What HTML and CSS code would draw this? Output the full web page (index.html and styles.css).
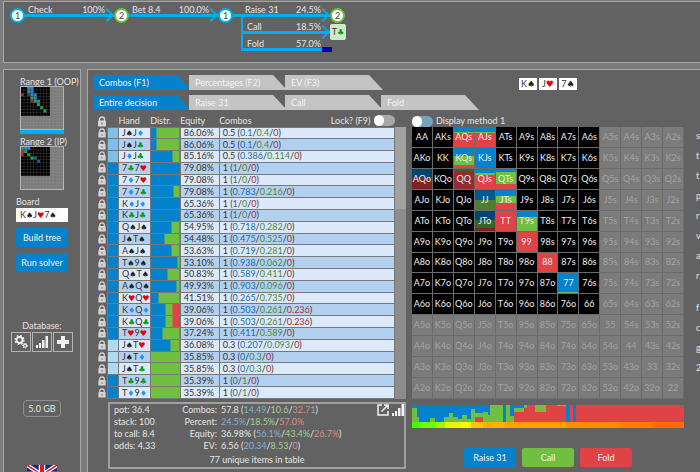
FILE: index.html
```html
<!DOCTYPE html>
<html lang="en">
<head>
    <meta charset="UTF-8">
    <meta name="viewport" content="width=device-width, initial-scale=1.0">
    <title>Range Solver</title>
    <link rel="stylesheet" href="styles.css">
</head>
<body>
    <svg class="sprite" aria-hidden="true">
        <symbol id="lock" viewBox="0 0 10 11">
            <path d="M2.5 5V3.5a2.5 2.5 0 0 1 5 0V5" fill="none" stroke="currentColor" stroke-width="1.4"/>
            <rect x="1" y="4.5" width="8" height="6" rx="1" fill="currentColor"/>
            <path d="M5 6.5v2" stroke="#777" stroke-width="1.2"/>
        </symbol>
        <symbol id="bars" viewBox="0 0 12 12">
            <path d="M0 9h2v3H0zM3 7h2v5H3zM6 4h2.500v8H6zM9.500 0H12v12H9.500z" fill="currentColor"/>
        </symbol>
    </svg>

    <header class="tree panel">
        <span class="node oop">1</span>
        <div class="edge arrow"><span>Check</span><span>100%</span></div>
        <span class="node ip">2</span>
        <div class="edge arrow"><span>Bet 8.4</span><span>100.0%</span></div>
        <span class="node oop">1</span>
        <div class="branches">
            <div class="branch">
                <div class="edge arrow first"><span>Raise 31</span><span>24.5%</span></div>
                <span class="node ip">2</span>
            </div>
            <div class="branch">
                <div class="edge arrow split"><span>Call</span><span>18.5%</span></div>
                <span class="next-card">T<i class="c">♣</i></span>
            </div>
            <div class="branch">
                <div class="edge split"><span>Fold</span><span>57.0%</span></div>
                <span class="leaf"></span>
            </div>
        </div>
    </header>

    <div class="columns">
        <aside class="sidebar panel">
            <div class="range">
                <span>Range 1 (OOP)</span>
                <svg class="thumb" id="range1" viewBox="0 0 130 130"></svg>
                <div class="active-bar"></div>
            </div>
            <div class="range">
                <span>Range 2 (IP)</span>
                <svg class="thumb" id="range2" viewBox="0 0 130 130"></svg>
            </div>
            <div class="board">
                <span>Board</span>
                <div class="board-box">K<i class="s">♠</i>J<i class="h">♥</i>7<i class="s">♠</i></div>
                <button type="button" class="btn blue">Build tree</button>
                <button type="button" class="btn blue">Run solver</button>
            </div>
            <div class="database">
                <span>Database:</span>
                <div class="icon-row">
                    <button type="button" aria-label="Settings">
                        <svg width="14" height="14" viewBox="0 0 14 14" fill="none" stroke="currentColor">
                            <circle cx="5.500" cy="5" r="3" stroke-width="1.800"/>
                            <circle cx="5.500" cy="5" r="4.400" stroke-width="1.400" stroke-dasharray="1.730 1.730"/>
                            <circle cx="11" cy="10.700" r="1.500" stroke-width="1.200"/>
                            <circle cx="11" cy="10.700" r="2.400" stroke-width="1" stroke-dasharray="1.080 1.080"/>
                        </svg>
                    </button>
                    <button type="button" aria-label="Statistics"><svg width="12" height="12"><use href="#bars"/></svg></button>
                    <button type="button" aria-label="Add">
                        <svg width="12" height="12" viewBox="0 0 12 12"><path d="M4 0h4v4h4v4H8v4H4V8H0V4h4z" fill="currentColor"/></svg>
                    </button>
                </div>
            </div>
            <div class="memory">5.0 GB</div>
            <svg class="flag" width="30" height="20" viewBox="0 0 60 40">
                <path d="M0 0h60v40H0z" fill="#1b2a78"/>
                <path d="M0 0l60 40M60 0L0 40" stroke="#fff" stroke-width="8"/>
                <path d="M0 0l60 40M60 0L0 40" stroke="#d8172c" stroke-width="3"/>
                <path d="M30 0v40M0 20h60" stroke="#fff" stroke-width="13"/>
                <path d="M30 0v40M0 20h60" stroke="#d8172c" stroke-width="8"/>
            </svg>
        </aside>

        <main class="main panel">
            <div class="work">
                <nav class="tabs">
                    <button type="button" class="tab active">Combos (F1)</button>
                    <button type="button" class="tab">Percentages (F2)</button>
                    <button type="button" class="tab">EV (F3)</button>
                </nav>
                <div class="cards">
                    <span>K<i class="s">♠</i></span>
                    <span>J<i class="h">♥</i></span>
                    <span>7<i class="s">♠</i></span>
                </div>
                <nav class="tabs second">
                    <button type="button" class="tab active">Entire decision</button>
                    <button type="button" class="tab">Raise 31</button>
                    <button type="button" class="tab">Call</button>
                    <button type="button" class="tab">Fold</button>
                </nav>

                <section class="combos">
                    <div class="table-wrap">
                        <table>
                            <thead>
                                <tr>
                                    <th class="lock"><svg width="10" height="11"><use href="#lock"/></svg></th>
                                    <th class="weight"></th>
                                    <th class="hand">Hand</th>
                                    <th class="distr">Distr.</th>
                                    <th class="equity">Equity</th>
                                    <th>
                                        <div class="combos-head">
                                            <span>Combos</span>
                                            <label>Lock? (F9) <input type="checkbox" class="toggle"></label>
                                        </div>
                                    </th>
                                </tr>
                            </thead>
                            <tbody id="rows"></tbody>
                        </table>
                        <div class="scrollbar"><div class="thumb-bar"></div></div>
                    </div>
                    <div class="summary">
                        <div class="spot">
                            <div>pot: 36.4</div>
                            <div>stack: 100</div>
                            <div>to call: 8.4</div>
                            <div>odds: 4.33</div>
                        </div>
                        <dl>
                            <dt>Combos:</dt><dd>57.8 (<b class="r">14.49</b>/<b class="k">10.6</b>/<b class="f">32.71</b>)</dd>
                            <dt>Percent:</dt><dd><b class="r">24.5%</b>/<b class="k">18.5%</b>/<b class="f">57.0%</b></dd>
                            <dt>Equity:</dt><dd>36.98% (<b class="r">56.1%</b>/<b class="k">43.4%</b>/<b class="f">26.7%</b>)</dd>
                            <dt>EV:</dt><dd>6.56 (<b class="r">20.34</b>/<b class="k">8.53</b>/<b class="f">0</b>)</dd>
                        </dl>
                        <div class="summary-icons">
                            <svg width="12" height="12" viewBox="0 0 12 12" fill="none" stroke="currentColor" stroke-width="1.500">
                                <path d="M5 1H1v10h10V7M7 1h4v4M11 1L4.500 7.500"/>
                            </svg>
                            <svg width="12" height="12"><use href="#bars"/></svg>
                        </div>
                        <p>77 unique items in table</p>
                    </div>
                </section>

                <section class="matrix-col">
                    <label class="method"><input type="checkbox" class="toggle on"> Display method 1</label>
                    <div class="matrix" id="matrix"></div>
                    <svg class="chart" viewBox="0 0 814 70" preserveAspectRatio="none" shape-rendering="crispEdges">
                        <rect width="814" height="52" fill="#0482cc"/>
                        <path fill="#70bf41" d="M0 52V10h14v28h8v14zM54 52V41h16v11zM96 52V38h14V24h14v14h14v6h12V30h14v14h12V13h12v11h24v-4h14v10h8V0h38v52zM280 52V0h14v34h10V8h30V0h128v52z"/>
                        <path fill="#e04345" d="M188 52V38h24v14zM304 52V22h30V10h10V0h24v20h34V0h32v4h28v48zM472 52V0h10v52zM492 0h322v52H492z"/>
                        <path fill="#0482cc" d="M462 0h10v22h-5v30h-5z"/>
                        <g id="strength"></g>
                    </svg>
                    <div class="actions">
                        <button type="button" class="btn blue">Raise 31</button>
                        <button type="button" class="btn green">Call</button>
                        <button type="button" class="btn red">Fold</button>
                    </div>
                </section>
            </div>

            <div class="notes">
                <p>s<br>t<br>t<br>p<br>r<br>v<br>a<br>r</p>
                <p>f<br>c<br>g<br>2</p>
            </div>
        </main>
    </div>

    <script src="script.js"></script>
</body>
</html>
```
FILE: styles.css
```css
* {
    box-sizing: border-box;
}
body {
    margin: 0;
    padding: 1px 0 0 3px;
    height: 100vh;
    overflow: hidden;
    display: flex;
    flex-direction: column;
    gap: 6px;
    background: #7b7b7b;
    color: #e4e4e4;
    font-family: Lato, "DejaVu Sans", sans-serif;
    font-size: 9px;
    line-height: 12px;
}
button {
    font: inherit;
    color: #f2f2f2;
    border: none;
    padding: 0;
    cursor: pointer;
}
i {
    font-style: normal;
    font-family: "DejaVu Sans", sans-serif;
    font-size: 8px;
    line-height: 1;
}
.s { color: #222; }
.h { color: #e60000; }
.d { color: #1e90ff; }
.c { color: #0a9a0a; }
.sprite {
    position: absolute;
    width: 0;
    height: 0;
}
.panel {
    background: #626262;
    border: 1px solid #a6a6a6;
}

/* game tree */
.tree {
    flex: none;
    height: 62px;
    border-right: none;
    display: flex;
    align-items: flex-start;
    padding: 6px 0 0 6px;
}
.node {
    flex: none;
    width: 15px;
    height: 15px;
    border-radius: 50%;
    border: 2px solid #00adf0;
    background: #fff;
    color: #444;
    line-height: 11px;
    text-align: center;
}
.node.ip {
    border-color: #70bf41;
}
.edge {
    position: relative;
    width: 89px;
    height: 9px;
    padding: 0 9px 0 3px;
    display: flex;
    justify-content: space-between;
    align-items: flex-end;
    border-bottom: 3px solid #00adf0;
    line-height: 8px;
}
.edge.arrow::after {
    content: "";
    position: absolute;
    right: 2px;
    bottom: -6px;
    width: 8px;
    height: 8px;
    border: solid #00adf0;
    border-width: 2px 2px 0 0;
    transform: rotate(45deg);
}
.edge.first {
    width: 97px;
    padding-left: 12px;
}
.edge.split {
    margin-left: 8px;
    padding-left: 4px;
    height: 17px;
    border-left: 2px solid #00adf0;
}
.branch {
    display: flex;
}
.branch:first-child {
    height: 9px;
}
.next-card {
    width: 16px;
    height: 16px;
    margin-top: 7px;
    border-radius: 2px;
    background: #cdebc8;
    color: #333;
    line-height: 16px;
    text-align: center;
    white-space: nowrap;
}
.branch:nth-child(2) {
    height: 17px;
}
.leaf {
    width: 10px;
    height: 5px;
    margin: 13px 0 0 -8px;
    background: #0000b0;
    z-index: 1;
}

.columns {
    flex: 1;
    min-height: 0;
    display: flex;
    gap: 6px;
}

/* sidebar */
.sidebar {
    flex: none;
    width: 78px;
    border-bottom: none;
    display: flex;
    flex-direction: column;
    padding-top: 6px;
}
.range {
    padding-left: 16px;
    height: 60px;
    display: flex;
    flex-direction: column;
    flex: none;
    white-space: nowrap;
}
.range > span {
    height: 10px;
    line-height: 11px;
}
.thumb {
    width: 44px;
    height: 44px;
    border: 1px solid #b4b4b4;
    background: #8a8a8a;
}
.active-bar {
    width: 44px;
    height: 4px;
    background: #00adf0;
}
.board {
    padding: 0 12px;
    display: flex;
    flex-direction: column;
}
.board-box {
    height: 14px;
    margin-bottom: 6px;
    padding-left: 4px;
    background: #fff;
    color: #333;
    line-height: 13px;
}
.btn {
    height: 19px;
    border-radius: 2px;
}
.board .btn {
    margin-bottom: 6px;
}
.blue { background: #0482cc; }
.green { background: #70bf41; }
.red { background: #e04345; }
.database {
    margin-top: 42px;
    text-align: center;
}
.icon-row {
    display: flex;
    justify-content: center;
    gap: 1px;
}
.icon-row button {
    width: 20px;
    height: 20px;
    display: flex;
    align-items: center;
    justify-content: center;
    background: none;
    border: 1px solid #b4b4b4;
}
.memory {
    width: 38px;
    height: 17px;
    margin: 48px auto;
    border: 1px solid #8e8e8e;
    border-radius: 4px;
    line-height: 15px;
    text-align: center;
}
.flag {
    flex: none;
    align-self: center;
}

/* main panel */
.main {
    flex: 1;
    min-width: 0;
    border-right: none;
    border-bottom: none;
    padding: 5px 0 0 5px;
    display: flex;
    gap: 12px;
}
.work {
    flex: 1;
    min-width: 0;
    display: grid;
    grid-template-columns: 313fr 272fr;
    grid-template-rows: 15px 15px 1fr;
    column-gap: 6px;
    row-gap: 5px;
}
.tabs {
    display: flex;
}
.tabs.second {
    grid-column: 1 / -1;
}
.tab {
    flex: none;
    width: 98px;
    margin-right: -2px;
    padding-left: 6px;
    text-align: left;
    background: #c4c4c4;
    clip-path: polygon(0 0, calc(100% - 14px) 0, 100% 100%, 0 100%);
}
.tab.active {
    position: relative;
    background: #0482cc;
}
.cards {
    display: flex;
    justify-content: center;
    gap: 2px;
    padding-top: 3px;
}
.cards span {
    width: 18px;
    height: 12px;
    background: #fff;
    color: #333;
    text-align: center;
    line-height: 12px;
    white-space: nowrap;
}
.cards i {
    font-size: 9px;
}

.combos {
    min-width: 0;
}
.table-wrap {
    display: flex;
}
table {
    flex: 1;
    height: 284px;
    border-collapse: collapse;
    table-layout: fixed;
}
th {
    height: 12px;
    padding: 0;
    text-align: left;
    font-weight: normal;
    line-height: 11px;
}
.lock {
    width: 14px;
    padding-left: 4px;
    color: #d6d6d6;
}
.lock svg {
    display: block;
}
.weight { width: 11px; }
.hand { width: 30px; }
.distr { width: 30px; }
.equity { width: 39px; }
.combos-head {
    display: flex;
    justify-content: space-between;
}
.combos-head label,
.method {
    display: flex;
    align-items: center;
    gap: 3px;
}
.toggle {
    appearance: none;
    position: relative;
    width: 21px;
    height: 11px;
    margin: 0;
    border-radius: 6px;
    background: #a8a8a8;
}
.toggle::before {
    content: "";
    position: absolute;
    width: 10px;
    height: 11px;
    border-radius: 50%;
    background: #fff;
}
.toggle.on {
    background: #74a3c0;
}
td {
    height: 11px;
    padding: 0 0 0 3px;
    border: 1px solid #777;
    line-height: 10px;
    color: #333;
    white-space: nowrap;
    background: #dce9fa;
}
tr:nth-child(even) td {
    background: #b3d0f1;
}
tbody .lock,
tbody tr:nth-child(even) .lock {
    background: none;
    border: none;
    padding: 0 0 0 4px;
    color: #d6d6d6;
}
tbody tr .weight,
tbody tr:nth-child(even) .weight { background: #0482cc; }
tbody tr.half .weight,
tbody tr.half:nth-child(even) .weight { background: #7fbfe5; }
tbody tr.third .weight,
tbody tr.third:nth-child(even) .weight { background: #b2d9ef; }
td .r { color: #1c6ba3; }
td .k { color: #4a8a34; }
td .f { color: #a83232; }
b {
    font-weight: normal;
}
.scrollbar {
    flex: none;
    width: 11px;
    margin-top: 12px;
    background: #8c8c8c;
}
.thumb-bar {
    height: 30%;
    background: #a2a2a2;
}

.summary {
    position: relative;
    margin: 3px 0 0 15px;
    border: 2px solid #a0a0a0;
    height: 67px;
    padding: 0 4px;
    display: grid;
    grid-template-columns: 66px 1fr;
    align-content: start;
}
.summary dl {
    margin: 0;
    display: grid;
    grid-template-columns: 37px 1fr;
    column-gap: 4px;
}
.summary dt {
    text-align: right;
}
.summary dd {
    margin: 0;
}
.summary p {
    grid-column: 1 / -1;
    margin: 2px 0 0;
    text-align: center;
}
.summary .r { color: #7eb3d6; }
.summary .k { color: #a2cf8d; }
.summary .f { color: #dd8a8a; }
.summary-icons {
    position: absolute;
    top: 0;
    right: 0;
    display: flex;
    gap: 3px;
    color: #f4f4f4;
}

.matrix-col {
    min-width: 0;
}
.method {
    height: 12px;
    line-height: 12px;
}
.matrix {
    display: grid;
    grid-template-columns: repeat(13, 1fr);
    grid-auto-rows: 1fr;
    aspect-ratio: 1;
}
.cell {
    display: flex;
    align-items: center;
    justify-content: center;
    border: solid #6b6b6b;
    border-width: 0 1px 1px 0;
    background: #000;
    color: #eee;
}
.cell.off {
    background: #7b7b7b;
    color: #a2a2a2;
}
.chart {
    display: block;
    width: 100%;
    height: 23px;
    margin-top: 6px;
}
.actions {
    margin-top: 20px;
    display: flex;
    justify-content: center;
    gap: 6px;
}
.actions .btn {
    width: 52px;
}

.notes {
    flex: none;
    width: 4px;
    padding-top: 51px;
    font-size: 9px;
    line-height: 20px;
}
.notes p {
    margin: 0 0 12px;
}
```
FILE: script.js
```js
const BLUE = '#0482cc', GREEN = '#70bf41', RED = '#e04345';
const SUITS = { s: '♠', h: '♥', d: '♦', c: '♣' };

// hand, equity, combos, raise / call / fold
const rows = [
    ['JsJd', '86.06%', 0.5, 0.1, 0.4, 0],
    ['JsJc', '86.06%', 0.5, 0.1, 0.4, 0],
    ['JdJc', '85.16%', 0.5, 0.386, 0.114, 0],
    ['7c7h', '79.08%', 1, 1, 0, 0],
    ['7d7h', '79.08%', 1, 1, 0, 0],
    ['7d7c', '79.08%', 1, 0.783, 0.216, 0],
    ['KdJd', '65.36%', 1, 1, 0, 0],
    ['KcJc', '65.36%', 1, 1, 0, 0],
    ['QsJs', '54.95%', 1, 0.718, 0.282, 0],
    ['JsTs', '54.48%', 1, 0.475, 0.525, 0],
    ['AsJs', '53.63%', 1, 0.719, 0.281, 0],
    ['Ts9s', '53.10%', 1, 0.938, 0.062, 0],
    ['QsTs', '50.83%', 1, 0.589, 0.411, 0],
    ['AsQs', '49.93%', 1, 0.903, 0.096, 0],
    ['KhQh', '41.51%', 1, 0.265, 0.735, 0],
    ['KdQd', '39.06%', 1, 0.503, 0.261, 0.236],
    ['KcQc', '39.06%', 1, 0.503, 0.261, 0.236],
    ['Th9h', '37.24%', 1, 0.411, 0.589, 0],
    ['JsTh', '36.08%', 0.3, 0.207, 0.093, 0],
    ['JsTd', '35.85%', 0.3, 0, 0.3, 0],
    ['JsTc', '35.85%', 0.3, 0, 0.3, 0],
    ['Tc9c', '35.39%', 1, 0, 1, 0],
    ['Td9d', '35.39%', 1, 0, 1, 0]
];

// stacked colour bands: [[colour, end %], ...]
function bands(direction, parts) {
    let from = 0;
    const stops = parts.map(([color, to]) => {
        const stop = `${color} ${from}% ${to}%`;
        from = to;
        return stop;
    });
    return `linear-gradient(${direction}, ${stops.join(', ')})`;
}

document.getElementById('rows').innerHTML = rows.map(([hand, equity, total, r, k, f]) => {
    const cards = hand.replace(/(.)([shdc])/g, (m, rank, suit) => `${rank}<i class="${suit}">${SUITS[suit]}</i>`);
    const distr = bands('to right', [[BLUE, r / total * 100], [GREEN, (r + k) / total * 100 + (f ? 0 : 1)], [RED, 100]]);
    const weight = total === 0.5 ? 'half' : total === 0.3 ? 'third' : '';
    return `<tr class="${weight}">
        <td class="lock"><svg width="10" height="10"><use href="#lock"/></svg></td>
        <td class="weight"></td>
        <td>${cards}</td>
        <td style="background: ${distr}"></td>
        <td>${equity}</td>
        <td>${total} (<b class="r">${r}</b>/<b class="k">${k}</b>/<b class="f">${f}</b>)</td>
    </tr>`;
}).join('');

// range matrix
const RANKS = 'AKQJT98765432';
const mixed = {
    AQs: [[BLUE, 24], [GREEN, 28], [RED, 100]],
    AJs: [[BLUE, 24], [GREEN, 32], [RED, 100]],
    KQs: [[BLUE, 40], [GREEN, 84], [RED, 100]],
    KJs: [[BLUE, 100]],
    AQo: [['#00466e', 40], ['#7a2428', 100]],
    QQ: [['#3a6425', 8], ['#922c2e', 100]],
    QJs: [[BLUE, 22], [GREEN, 32], [RED, 100]],
    QTs: [[BLUE, 16], [GREEN, 74], [RED, 100]],
    JJ: [['#005a8e', 48], ['#4d7f2e', 100]],
    JTs: [[BLUE, 28], [GREEN, 66], [RED, 100]],
    JTo: [['#00466e', 45], ['#3a6425', 86], ['#7a2428', 100]],
    TT: [[RED, 100]],
    T9s: [[BLUE, 32], [GREEN, 100]],
    99: [[RED, 100]],
    88: [[RED, 100]],
    77: [[BLUE, 93], [GREEN, 100]]
};
let html = '';
for (let y = 0; y < 13; y++) {
    for (let x = 0; x < 13; x++) {
        const name = x === y ? RANKS[x] + RANKS[x] : x > y ? RANKS[y] + RANKS[x] + 's' : RANKS[x] + RANKS[y] + 'o';
        const off = x > 8 || y > 8 ? ' off' : '';
        const style = mixed[name] ? ` style="background: ${bands('to bottom', mixed[name])}"` : '';
        html += `<div class="cell${off}"${style}>${name}</div>`;
    }
}
document.getElementById('matrix').innerHTML = html;

// small range previews: [column, row, colour]
function drawThumb(id, cells) {
    let out = '';
    for (let y = 0; y < 13; y++) {
        for (let x = 0; x < 13; x++) {
            const hit = cells.find(c => c[0] === x && c[1] === y);
            const fill = hit ? hit[2] : x < 9 && y < 9 ? '#000' : '#7b7b7b';
            out += `<rect x="${x * 10}" y="${y * 10}" width="8.5" height="8.5" fill="${fill}"/>`;
        }
    }
    document.getElementById(id).innerHTML = '<path d="M0 0h90v90H0z" fill="#3c3c3c"/>' + out;
}
const B = '#2a86dc', G = '#1ea83c', R = '#b01c2c';
drawThumb('range1', [
    [2, 0, B], [3, 0, B], [2, 1, B], [3, 1, B], [0, 2, R], [2, 2, '#0c6a20'], [3, 2, B], [4, 2, B],
    [3, 3, G], [4, 3, B], [3, 4, R], [4, 4, G], [5, 4, B], [5, 5, G], [6, 6, G], [7, 7, G]
]);
drawThumb('range2', [
    [0, 0, G], [1, 0, B], [2, 0, B], [0, 1, '#e8202c'], [1, 1, G], [0, 2, R], [2, 2, G],
    [3, 3, G], [4, 3, '#1c5c9c'], [5, 4, '#1c5c9c']
]);

// equity strip below the chart: [end x, colour]
let start = 0;
document.getElementById('strength').innerHTML = [
    [23, '#40ff00'], [71, '#6cff00'], [98, '#a8f400'], [148, '#ecf400'], [176, '#fff600'], [212, '#ffc400'],
    [278, '#ffb000'], [462, '#ffa000'], [622, '#ff8c00'], [718, '#ff7c00'], [814, '#ff6a00']
].map(([end, color]) => {
    const rect = `<rect x="${start}" y="53" width="${end - start}" height="17" fill="${color}"/>`;
    start = end;
    return rect;
}).join('');
```
